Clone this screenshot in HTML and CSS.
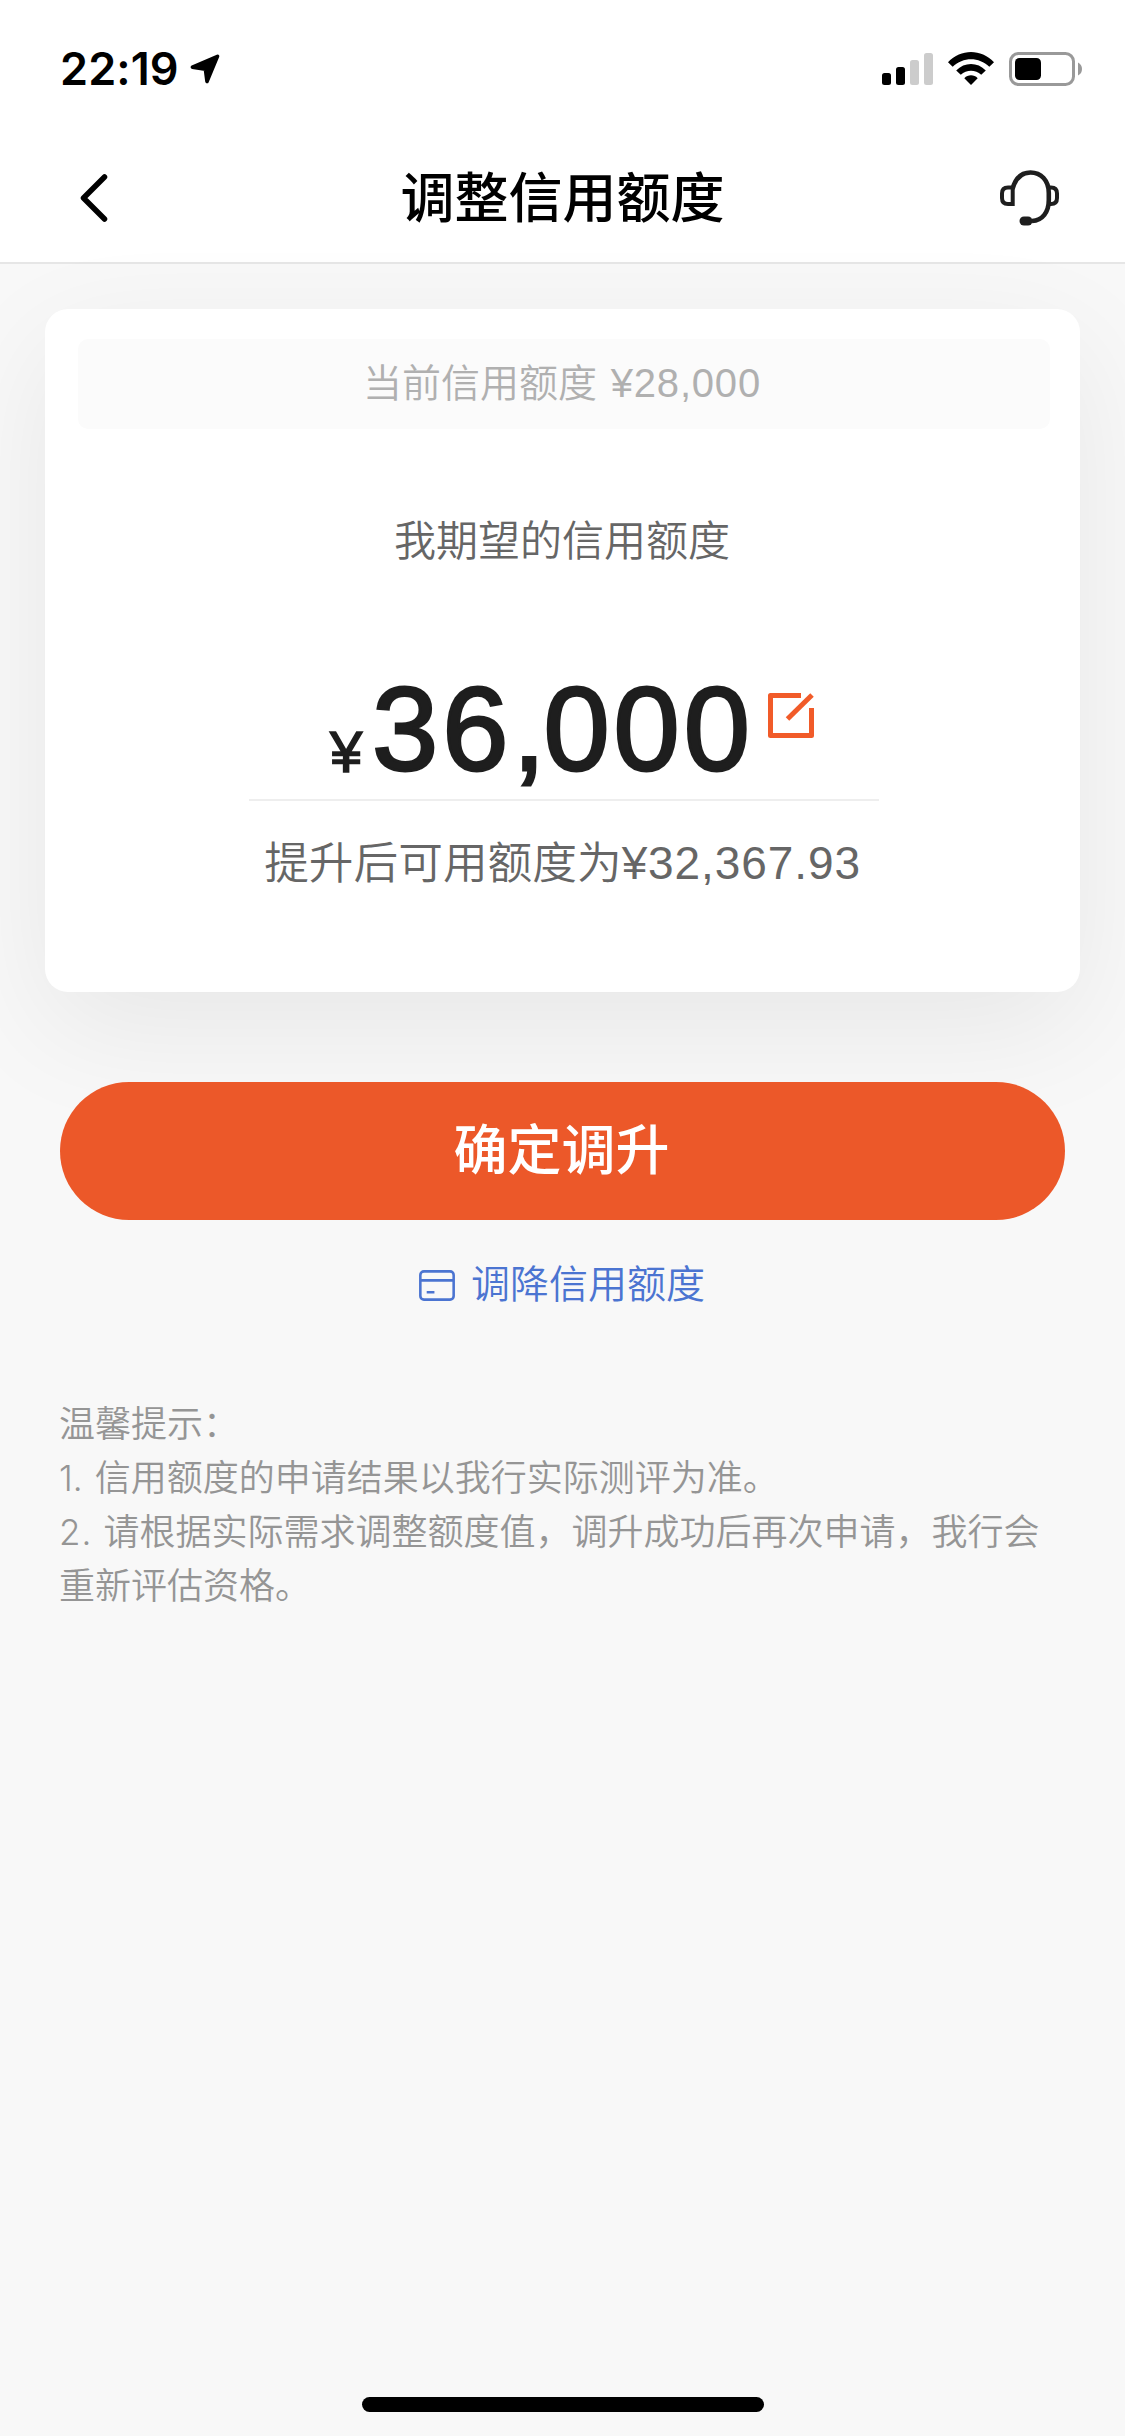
FILE: index.html
```html
<!DOCTYPE html>
<html lang="zh-CN">
<head>
<meta charset="utf-8">
<title>调整信用额度</title>
<link rel="stylesheet" href="styles.css">
</head>
<body>
<header class="header">
  <div class="status">
    <div class="status-left">
      <span class="time">22:19</span>
      <svg class="location" viewBox="0 0 30 30"><path d="M27.5 2.3 17 27.5 15.4 15.2 2.4 13.2Z" fill="#000" stroke="#000" stroke-width="3.6" stroke-linejoin="round"/></svg>
    </div>
    <div class="status-right">
      <svg class="signal" viewBox="0 0 51 32"><rect y="20" width="9" height="12" rx="2.5"/><rect x="14" y="14" width="9" height="18" rx="2.5"/><g fill="#ccc"><rect x="28" y="7" width="9" height="25" rx="2.5"/><rect x="42" width="9" height="32" rx="2.5"/></g></svg>
      <svg class="wifi" viewBox="0 0 46 33"><path d="M0 10.2C13-3.4 33-3.4 46 10.2L41.3 14.8C31 4.7 15 4.7 4.7 14.8Z"/><path d="M8.2 18.4C16.5 9.8 29.5 9.8 37.8 18.4L33.2 22.8C27.5 17.3 18.5 17.3 12.8 22.8Z"/><path d="M16.3 26.2C20 22.4 26 22.4 29.7 26.2L23 33Z"/></svg>
      <svg class="battery" viewBox="0 0 73 34"><rect x="1.5" y="1.5" width="63" height="31" rx="8" fill="none" stroke="#999" stroke-width="3"/><rect x="6" y="6" width="26" height="22" rx="4.5"/><path d="M69 10.5Q73 12.5 73 17T69 23.5Z" fill="#999"/></svg>
    </div>
  </div>
  <nav class="nav">
    <svg class="back" viewBox="0 0 28 48"><path d="M24.5 3 3.5 24 24.5 45" fill="none" stroke="#000" stroke-width="5.5" stroke-linecap="round" stroke-linejoin="round"/></svg>
    <h1 class="title">调整信用额度</h1>
    <svg class="service" viewBox="0 0 59 56"><g fill="none" stroke="#1e1e1e" stroke-width="4"><path d="M12.7 17.5V34H8Q2 34 2 28V23.5Q2 17.5 8 17.5Z"/><path d="M49.5 17.5H51Q57 17.5 57 23.5V28Q57 34 51 34H49.5"/><path stroke-width="4.6" d="M12.5 19C15.5 8 21.5 2.5 30.5 2.5 41 2.5 48.8 10.5 48.8 23V30C48.8 42 42.5 50.5 32 51"/></g><rect x="19.5" y="46.500" width="13" height="9" rx="4.500" fill="#1e1e1e"/></svg>
  </nav>
</header>
<main class="content">
  <section class="card">
    <div class="current">当前信用额度 <span class="num">¥28,000</span></div>
    <div class="label">我期望的信用额度</div>
    <div class="amount">
      <span class="yen">¥</span><span class="value">36<span class="comma">,</span>000</span>
      <svg class="edit" viewBox="0 0 46 46"><path d="M33 2.500H2.500V42.500H43.500V15" fill="none" stroke="#f15b29" stroke-width="5" stroke-linejoin="round"/><path d="M44 2 19.500 26" stroke="#f15b29" stroke-width="5"/></svg>
    </div>
    <div class="available">提升后可用额度为<span class="num">¥32,367.93</span></div>
  </section>
  <button class="confirm">确定调升</button>
  <a class="lower">
    <svg class="card-icon" viewBox="0 0 35 30"><g fill="none" stroke="#4b74d1" stroke-width="2.500"><rect x="1.300" y="1.300" width="32.400" height="27.400" rx="3.500"/><path d="M1 10H34M7.500 21.500H15"/></g></svg>
    <span>调降信用额度</span>
  </a>
  <div class="tips">
    <p>温馨提示：</p>
    <p><span class="no">1.</span>信用额度的申请结果以我行实际测评为准。</p>
    <p><span class="no no-wide">2.</span>请根据实际需求调整额度值，调升成功后再次申请，我行会重新评估资格。</p>
  </div>
</main>
<footer class="home"><div class="home-bar"></div></footer>
</body>
</html>
```
FILE: styles.css
```css
* { box-sizing: border-box; }
body {
  margin: 0;
  width: 1125px;
  height: 2436px;
  display: flex;
  flex-direction: column;
  overflow: hidden;
  background: #f8f8f8;
  font-family: "Noto Sans CJK SC", sans-serif;
}
svg { display: block; flex: none; }
p, h1 { margin: 0; }
.header {
  height: 264px;
  background: #fff;
  border-bottom: 2px solid #e6e6e6;
}
.status {
  height: 132px;
  padding: 0 43px 0 60px;
  display: flex;
  justify-content: space-between;
}
.status-left { display: flex; align-items: flex-start; padding-top: 42px; }
.time {
  width: 130px;
  font: 600 45px/54px Inter, sans-serif;
  letter-spacing: .1px;
  white-space: nowrap;
}
.location { width: 30px; height: 30px; margin-top: 12px; }
.status-right { display: flex; align-items: flex-start; padding-top: 52px; }
.signal { width: 51px; height: 32px; margin: 1px 15px 0 0; }
.wifi { width: 46px; height: 33px; margin-right: 15px; }
.battery { width: 73px; height: 34px; }
.nav {
  height: 130px;
  padding: 2px 66px 0 80px;
  display: flex;
  align-items: center;
  justify-content: space-between;
}
.back { width: 28px; height: 48px; margin-right: 31px; }
.title { font-size: 54px; font-weight: 500; line-height: 80px; margin: 0 14px 6px 0; }
.service { width: 59px; height: 56px; }
.content { flex: 1; padding: 45px 45px 0; }
.card {
  height: 683px;
  padding: 30px 30px 0 33px;
  border-radius: 23px;
  background: #fff;
  box-shadow: 0 36px 120px rgba(0, 0, 0, .07);
  text-align: center;
}
.num { font-family: "Liberation Sans", sans-serif; font-weight: 400; }
.current {
  height: 90px;
  padding-right: 4px;
  border-radius: 10px;
  background: #fbfbfb;
  color: #b0b0b0;
  font-size: 39px;
  font-weight: 350;
  line-height: 83px;
}
.current .num { margin-left: 5px; font-size: 40px; letter-spacing: .8px; }
.label {
  margin-top: 79px;
  padding-right: 4px;
  color: #666;
  font-size: 42px;
  font-weight: 350;
  line-height: 60px;
}
.amount {
  width: 630px;
  height: 233px;
  margin: 0 auto;
  padding-left: 81px;
  border-bottom: 2px solid #eee;
  display: flex;
  align-items: flex-start;
  color: #1e1e1e;
  font-family: "Liberation Sans", sans-serif;
  text-align: left;
}
.yen {
  width: 42px;
  margin-top: 149px;
  font-size: 58px;
  line-height: 70px;
  -webkit-text-stroke: 1.5px #1e1e1e;
}
.value {
  width: 396px;
  margin-top: 91px;
  font-size: 119px;
  line-height: 140px;
  letter-spacing: 4px;
  white-space: nowrap;
  -webkit-text-stroke: 2.8px #1e1e1e;
}
.comma { letter-spacing: -2px; }
.edit { width: 46px; height: 46px; margin-top: 125px; }
.available {
  margin-top: 26px;
  padding-right: 3px;
  color: #666;
  font-size: 44.7px;
  font-weight: 350;
  line-height: 66px;
}
.available .num { font-size: 46px; letter-spacing: .9px; }
.confirm {
  display: block;
  width: 1005px;
  height: 138px;
  margin: 90px auto 0;
  padding: 0 2px 8px 0;
  border: 0;
  border-radius: 69px;
  background: #ec5829;
  color: #fff;
  font: 500 54px/80px "Noto Sans CJK SC", sans-serif;
}
.lower {
  margin-top: 31px;
  height: 60px;
  display: flex;
  align-items: center;
  justify-content: center;
  gap: 16px;
  padding-right: 1px;
  color: #4b74d1;
  font-size: 39px;
  font-weight: 350;
  line-height: 60px;
}
.card-icon { width: 36px; height: 31px; margin-top: 8px; }
.tips {
  padding: 83px 16px 0 14px;
  color: #959595;
  font-size: 36px;
  font-weight: 350;
  line-height: 54px;
}
.no {
  margin-right: 12px;
  font: 300 35px/1 Inter, sans-serif;
}
.no-wide { margin-right: 11px; letter-spacing: 1px; }
.home { height: 42px; display: flex; justify-content: center; }
.home-bar { width: 402px; height: 15px; margin-top: 3px; border-radius: 8px; background: #000; }
```
